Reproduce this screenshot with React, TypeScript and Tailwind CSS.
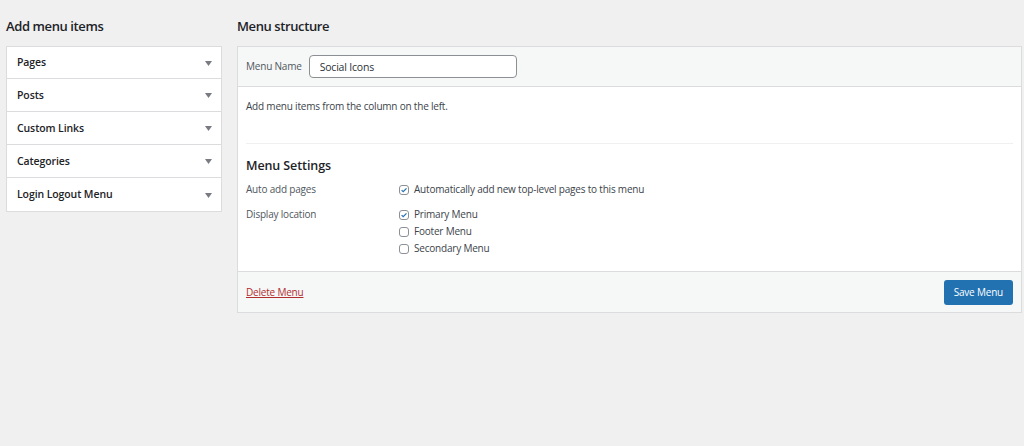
import React from "react";

const sections = ["Pages", "Posts", "Custom Links", "Categories", "Login Logout Menu"];

function Arrow() {
  return (
    <svg width="7" height="5" viewBox="0 0 7 5" className="mr-[9px]">
      <path d="M0 0h7L3.5 5z" fill="#787c82" />
    </svg>
  );
}

function Check({ checked }: { checked?: boolean }) {
  return (
    <span className="w-[10px] h-[10px] rounded-[3px] border border-[#8c8f94] bg-white flex items-center justify-center mr-[5px] shrink-0">
      {checked && (
        <svg width="8" height="8" viewBox="0 0 8 8">
          <path d="M1.6 4.1l1.6 1.6L6.5 2.3" fill="none" stroke="#2271b1" strokeWidth="1.2" />
        </svg>
      )}
    </span>
  );
}

function Option({ label, checked }: { label: string; checked?: boolean }) {
  return (
    <div className="flex items-center h-[17px]">
      <Check checked={checked} />
      <span>{label}</span>
    </div>
  );
}

export default function App() {
  return (
    <div
      className="min-h-screen bg-[#f0f0f1] flex gap-[15px] pl-[6px] pr-[2px] pt-[16px] text-[10px] tracking-[-0.2px] text-[#3c434a]"
      style={{ fontFamily: '"Open Sans", "Noto Sans", sans-serif' }}
    >
      <div className="w-[216px] shrink-0">
        <h2 className="text-[13px] leading-[20px] font-semibold text-[#1d2327] mb-[10px] tracking-[-0.4px]">Add menu items</h2>
        <ul className="bg-white border border-[#dcdcde] divide-y divide-[#dcdcde]">
          {sections.map((s) => (
            <li key={s} className="h-[33px] first:h-[32px] flex items-center justify-between pl-[10px] pt-[1px]">
              <span className="font-semibold text-[10.5px] tracking-[-0.1px] text-[#1d2327]">{s}</span>
              <Arrow />
            </li>
          ))}
        </ul>
      </div>

      <div className="flex-1">
        <h2 className="text-[13px] leading-[20px] font-semibold text-[#1d2327] mb-[10px] tracking-[-0.4px]">Menu structure</h2>
        <div className="border border-[#dcdcde] bg-white">
          <div className="h-[40px] bg-[#f6f7f7] border-b border-[#dcdcde] flex items-center px-[8px]">
            <label className="text-[#50575e] mr-[7px]">Menu Name</label>
            <input
              readOnly
              value="Social Icons"
              className="w-[208px] h-[23px] border border-[#8c8f94] rounded-[4px] bg-white px-[10px] text-[10.5px] text-[#2c3338] outline-none"
            />
          </div>

          <div className="px-[8px] pt-[12px]">
            <p className="leading-[14px]">Add menu items from the column on the left.</p>
            <div className="mt-[30px] border-t border-[#f0f0f1]" />
            <h3 className="mt-[13px] text-[12.5px] leading-[18px] font-semibold text-[#1d2327] tracking-[-0.1px]">Menu Settings</h3>
            <div className="mt-[6px] grid grid-cols-[153px_1fr] gap-y-[8px] pb-[14px]">
              <span className="leading-[17px] text-[#50575e]">Auto add pages</span>
              <div>
                <Option label="Automatically add new top-level pages to this menu" checked />
              </div>
              <span className="leading-[17px] text-[#50575e]">Display location</span>
              <div>
                <Option label="Primary Menu" checked />
                <Option label="Footer Menu" />
                <Option label="Secondary Menu" />
              </div>
            </div>
          </div>

          <div className="h-[41px] bg-[#f6f7f7] border-t border-[#dcdcde] flex items-center justify-between px-[8px]">
            <a href="#" className="text-[#b32d2e] underline">Delete Menu</a>
            <button className="h-[25px] px-[10px] rounded-[3px] bg-[#2271b1] text-white text-[10px]">Save Menu</button>
          </div>
        </div>
      </div>
    </div>
  );
}
